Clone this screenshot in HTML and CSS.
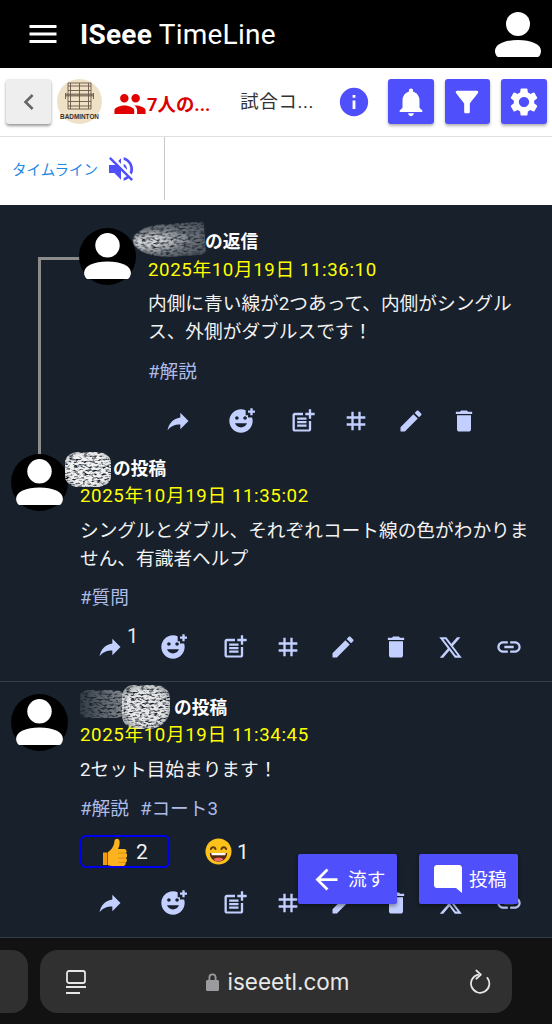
FILE: index.html
```html
<!DOCTYPE html>
<html lang="ja">
<head>
<meta charset="utf-8">
<title>ISeee TimeLine</title>
<link rel="stylesheet" href="styles.css">
</head>
<body>
<svg class="defs" width="0" height="0" aria-hidden="true">
  <filter id="scribble" x="-15%" y="-15%" width="130%" height="130%">
    <feTurbulence type="fractalNoise" baseFrequency=".22 .55" numOctaves="3" seed="7"/>
    <feColorMatrix values="0 0 0 0 .88  0 0 0 0 .88  0 0 0 0 .88  0 0 0 3.200 -.75"/>
    <feComposite in2="SourceGraphic" operator="in"/>
    <feGaussianBlur stdDeviation=".7"/>
  </filter>
  <symbol id="i-menu" viewBox="0 0 24 24"><path d="M3 18h18v-2H3v2zm0-5h18v-2H3v2zm0-7v2h18V6H3z"/></symbol>
  <symbol id="i-person" viewBox="0 0 56 56"><circle cx="28" cy="17" r="12"/><path d="M5 44c0-7 10-11 23-11s23 4 23 11c0 3-2 6-3 6H8c-1 0-3-3-3-6z"/></symbol>
  <symbol id="i-share" viewBox="0 0 24 24"><path d="M14 9V5l7 7-7 7v-4.100c-5 0-8.500 1.600-11 5.100 1-5 4-10 11-11z"/></symbol>
  <symbol id="i-react" viewBox="0 0 24 24"><path d="M18 9V7h-2V2.840C14.770 2.300 13.420 2 11.990 2 6.470 2 2 6.480 2 12s4.470 10 9.990 10C17.520 22 22 17.520 22 12c0-1.050-.17-2.050-.47-3H18zm-2.500-1c.83 0 1.500.67 1.500 1.500s-.67 1.500-1.500 1.500-1.500-.67-1.500-1.500.67-1.500 1.500-1.500zm-7 0c.83 0 1.500.67 1.500 1.500S9.330 11 8.500 11 7 10.330 7 9.500 7.670 8 8.500 8zm3.500 9.500c-2.330 0-4.310-1.460-5.110-3.500h10.220c-.8 2.040-2.780 3.500-5.110 3.500zM22 3h2v2h-2v2h-2V5h-2V3h2V1h2v2z"/></symbol>
  <symbol id="i-post" viewBox="0 0 24 24"><path d="M17 19.220H5V7h7V5H5c-1.100 0-2 .9-2 2v12c0 1.100.9 2 2 2h12c1.100 0 2-.9 2-2v-7h-2v7.220zM19 2h-2v3h-3c.01.01 0 2 0 2h3v2.990c.01.01 2 0 2 0V7h3V5h-3V2zM7 9h8v2H7zm0 3v2h8v-2h-3zm0 3h8v2H7z"/></symbol>
  <symbol id="i-tag" viewBox="0 0 24 24"><path d="M20 10V8h-4V4h-2v4h-4V4H8v4H4v2h4v4H4v2h4v4h2v-4h4v4h2v-4h4v-2h-4v-4h4zm-6 4h-4v-4h4v4z"/></symbol>
  <symbol id="i-edit" viewBox="0 0 24 24"><path d="M3 17.250V21h3.750L17.810 9.940l-3.750-3.750L3 17.250zM20.710 7.040c.39-.39.39-1.020 0-1.410l-2.340-2.340c-.39-.39-1.020-.39-1.410 0l-1.830 1.830 3.750 3.750 1.830-1.830z"/></symbol>
  <symbol id="i-delete" viewBox="0 0 24 24"><path d="M6 19c0 1.100.9 2 2 2h8c1.100 0 2-.9 2-2V7H6v12zM19 4h-3.500l-1-1h-5l-1 1H5v2h14V4z"/></symbol>
  <symbol id="i-x" viewBox="0 0 24 24"><path d="M18.244 2.250h3.308l-7.227 8.260 8.502 11.240H16.170l-5.214-6.817L4.990 21.750H1.680l7.730-8.835L1.254 2.250H8.080l4.713 6.231zm-1.161 17.520h1.833L7.084 4.126H5.117z"/></symbol>
  <symbol id="i-link" viewBox="0 0 24 24"><path d="M3.900 12c0-1.710 1.390-3.100 3.100-3.100h4V7H7c-2.760 0-5 2.240-5 5s2.240 5 5 5h4v-1.900H7c-1.710 0-3.100-1.390-3.100-3.100zM8 13h8v-2H8v2zm9-6h-4v1.900h4c1.710 0 3.100 1.390 3.100 3.100s-1.390 3.100-3.100 3.100h-4V17h4c2.760 0 5-2.240 5-5s-2.240-5-5-5z"/></symbol>
  <symbol id="i-avatar" viewBox="0 0 56 56"><circle cx="28" cy="28" r="28" fill="#000"/><circle cx="28" cy="17" r="12" fill="#fff"/><path fill="#fff" d="M5 44c0-7 10-11 23-11s23 4 23 11c0 3-2 6-3 6H8c-1 0-3-3-3-6z"/></symbol>
</svg>

<header class="appbar">
  <svg class="ic-menu"><use href="#i-menu"/></svg>
  <h1 class="title"><b>ISeee</b> TimeLine</h1>
  <svg class="ic-user"><use href="#i-person"/></svg>
</header>

<nav class="toolbar">
  <button class="back">
    <svg viewBox="0 0 24 24"><path d="M15.410 7.410L14 6l-6 6 6 6 1.410-1.410L10.830 12z"/></svg>
  </button>
  <svg class="logo" viewBox="0 0 45 45">
    <circle cx="22.500" cy="22.500" r="22.500" fill="#efe1c6"/>
    <g fill="none" stroke="#6a5848" stroke-width=".9">
      <path d="M11 4h23v26H11zM13.500 4v26M31.500 4v26M11 7h23M11 27h23M22.500 4v26"/>
      <path d="M11 11.500h23M11 22.500h23M8.500 14v6M36.500 14v6"/>
    </g>
    <path d="M8.500 14.500h28v3h-28z" fill="#6a5848" opacity=".75"/>
    <text class="logo-text" x="22.500" y="39.500" text-anchor="middle">BADMINTON</text>
  </svg>
  <svg class="ic-group" viewBox="0 0 24 24"><path d="M16 11c1.660 0 2.990-1.340 2.990-3S17.660 5 16 5c-1.660 0-3 1.340-3 3s1.340 3 3 3zm-8 0c1.660 0 2.990-1.340 2.990-3S9.660 5 8 5C6.340 5 5 6.340 5 8s1.340 3 3 3zm0 2c-2.330 0-7 1.170-7 3.500V19h14v-2.500c0-2.330-4.670-3.500-7-3.500zm8 0c-.29 0-.62.020-.97.050 1.160.840 1.970 1.970 1.970 3.450V19h6v-2.500c0-2.330-4.670-3.500-7-3.500z"/></svg>
  <span class="members">7人の...</span>
  <span class="match">試合コ...</span>
  <svg class="ic-info" viewBox="0 0 24 24"><path d="M12 2C6.480 2 2 6.480 2 12s4.480 10 10 10 10-4.480 10-10S17.520 2 12 2zm1 15h-2v-6h2v6zm0-8h-2V7h2v2z"/></svg>
  <button class="tool">
    <svg viewBox="0 0 24 24"><path d="M12 22c1.100 0 2-.9 2-2h-4c0 1.100.89 2 2 2zm6-6v-5c0-3.070-1.640-5.640-4.500-6.320V4c0-.83-.67-1.500-1.500-1.500s-1.500.67-1.500 1.500v.68C7.630 5.360 6 7.920 6 11v5l-2 2v1h16v-1l-2-2z"/></svg>
  </button>
  <button class="tool">
    <svg viewBox="0 0 24 24"><path d="M4.250 5.610C6.270 8.200 10 13 10 13v6c0 .55.45 1 1 1h2c.55 0 1-.45 1-1v-6s3.720-4.800 5.740-7.390C20.250 4.950 19.780 4 18.950 4H5.040c-.83 0-1.300.95-.79 1.610z"/></svg>
  </button>
  <button class="tool">
    <svg viewBox="0 0 24 24"><path d="M19.140 12.940c.04-.3.06-.61.06-.94 0-.32-.02-.64-.07-.94l2.030-1.580c.18-.14.23-.41.12-.61l-1.920-3.320c-.12-.22-.37-.29-.59-.22l-2.390.96c-.5-.38-1.030-.7-1.620-.94l-.36-2.540c-.04-.24-.24-.41-.48-.41h-3.840c-.24 0-.43.17-.47.41l-.36 2.540c-.59.24-1.130.57-1.620.94l-2.390-.96c-.22-.08-.47 0-.59.22L2.740 8.870c-.12.21-.08.47.12.61l2.030 1.580c-.05.3-.09.63-.09.94s.02.64.07.94l-2.030 1.580c-.18.14-.23.41-.12.61l1.920 3.320c.12.22.37.29.59.22l2.390-.96c.5.38 1.030.7 1.620.94l.36 2.540c.05.24.24.41.48.41h3.840c.24 0 .44-.17.47-.41l.36-2.540c.59-.24 1.130-.56 1.620-.94l2.390.96c.22.08.47 0 .59-.22l1.920-3.320c.12-.22.07-.47-.12-.61l-2.010-1.580zM12 15.600c-1.980 0-3.600-1.620-3.600-3.600s1.620-3.600 3.600-3.600 3.600 1.620 3.600 3.600-1.620 3.600-3.600 3.600z"/></svg>
  </button>
</nav>

<section class="tabs">
  <div class="tab">
    <span class="tab-label">タイムライン</span>
    <svg class="ic-mute" viewBox="0 0 24 24"><path d="M16.500 12c0-1.770-1.020-3.290-2.500-4.030v2.210l2.450 2.450c.03-.2.05-.41.05-.63zm2.500 0c0 .94-.2 1.820-.54 2.640l1.510 1.510C20.630 14.910 21 13.500 21 12c0-4.280-2.990-7.860-7-8.770v2.060c2.890.86 5 3.540 5 6.710zM4.270 3L3 4.270 7.730 9H3v6h4l5 5v-6.730l4.250 4.250c-.67.52-1.420.93-2.250 1.180v2.060c1.380-.31 2.630-.95 3.690-1.810L19.730 21 21 19.730l-9-9L4.270 3zM12 4L9.910 6.090 12 8.180V4z"/></svg>
  </div>
</section>

<main class="timeline">
  <article class="post post-reply">
    <span class="connector"></span>
    <svg class="avatar"><use href="#i-avatar"/></svg>
    <div class="content">
      <div class="name"><span class="hidden-name hn-a"><i class="smear sa1"></i></span>の返信</div>
      <div class="date">2025年10月19日 11:36:10</div>
      <p class="body">内側に青い線が2つあって、内側がシングルス、外側がダブルスです！</p>
      <div class="tags"><span>#解説</span></div>
      <div class="actions">
        <svg class="act"><use href="#i-share"/></svg>
        <svg class="act"><use href="#i-react"/></svg>
        <svg class="act"><use href="#i-post"/></svg>
        <svg class="act"><use href="#i-tag"/></svg>
        <svg class="act"><use href="#i-edit"/></svg>
        <svg class="act"><use href="#i-delete"/></svg>
      </div>
    </div>
  </article>

  <article class="post post-second">
    <svg class="avatar"><use href="#i-avatar"/></svg>
    <div class="content">
      <div class="name"><span class="hidden-name hn-b"><i class="smear sb1"></i></span>の投稿</div>
      <div class="date">2025年10月19日 11:35:02</div>
      <p class="body">シングルとダブル、それぞれコート線の色がわかりません、有識者ヘルプ</p>
      <div class="tags"><span>#質問</span></div>
      <div class="actions">
        <span class="act-wrap"><svg class="act"><use href="#i-share"/></svg><sup class="count">1</sup></span>
        <svg class="act"><use href="#i-react"/></svg>
        <svg class="act"><use href="#i-post"/></svg>
        <svg class="act"><use href="#i-tag"/></svg>
        <svg class="act"><use href="#i-edit"/></svg>
        <svg class="act"><use href="#i-delete"/></svg>
        <svg class="act act-x"><use href="#i-x"/></svg>
        <svg class="act"><use href="#i-link"/></svg>
      </div>
    </div>
  </article>

  <article class="post post-third">
    <svg class="avatar"><use href="#i-avatar"/></svg>
    <div class="content">
      <div class="name"><span class="hidden-name hn-c"><i class="smear sc1"></i><i class="smear sc2"></i></span>の投稿</div>
      <div class="date">2025年10月19日 11:34:45</div>
      <p class="body">2セット目始まります！</p>
      <div class="tags"><span>#解説</span><span>#コート3</span></div>
      <div class="reactions">
        <span class="reaction reaction-mine">
          <svg class="emoji-thumb" viewBox="0 0 24 28">
            <path fill="#f59a0c" d="M0 14.500h4.500V27H0z"/>
            <path fill="#fdb31f" d="M5 14C8 12 11 9 11.500 3 12 0 16 0 16.500 3 17 6 16 9 15 11h6c3 0 3 3 2 4 1.500 1 1.500 4 0 5 1.500 1.500 1 4-.5 4.500.5 2-.5 3.500-2.500 3.500H9c-2 0-4-1-4-1z"/>
            <path fill="none" stroke="#e8890a" stroke-width=".9" d="M15 15h8M15 20h8M15.500 24.500h7"/>
          </svg>
          <span>2</span>
        </span>
        <span class="reaction">
          <svg class="emoji" viewBox="0 0 28 28">
            <circle cx="14" cy="14" r="13.500" fill="#fcc21b"/>
            <path fill="none" stroke="#5a3a10" stroke-width="2" stroke-linecap="round" d="M6 11.500c1-2.500 4-2.500 5 0M17 11.500c1-2.500 4-2.500 5 0"/>
            <path fill="#5a2a10" d="M5 15.500h18c0 5.500-4 9-9 9s-9-3.500-9-9z"/>
            <path fill="#fff" d="M6.500 15.500h15l-.5 2.500H7z"/>
            <path fill="#ef6a6a" d="M9 22c2-2 8-2 10 0-1.500 1.700-3 2.300-5 2.300s-3.500-.6-5-2.300z"/>
          </svg>
          <span>1</span>
        </span>
      </div>
      <div class="actions">
        <svg class="act"><use href="#i-share"/></svg>
        <svg class="act"><use href="#i-react"/></svg>
        <svg class="act"><use href="#i-post"/></svg>
        <svg class="act"><use href="#i-tag"/></svg>
        <svg class="act"><use href="#i-edit"/></svg>
        <svg class="act"><use href="#i-delete"/></svg>
        <svg class="act act-x"><use href="#i-x"/></svg>
        <svg class="act"><use href="#i-link"/></svg>
      </div>
    </div>
  </article>

  <button class="fab fab-flow">
    <svg viewBox="0 0 24 24"><path d="M20 11H7.830l5.590-5.590L12 4l-8 8 8 8 1.410-1.410L7.830 13H20v-2z"/></svg>
    <span>流す</span>
  </button>
  <button class="fab fab-post">
    <svg viewBox="0 0 28 28"><path d="M3 0h22c1.700 0 3 1.300 3 3v25l-6-5H3c-1.700 0-3-1.300-3-3V3C0 1.300 1.300 0 3 0z"/></svg>
    <span>投稿</span>
  </button>
</main>

<footer class="browserbar">
  <div class="pill-stub"></div>
  <div class="urlbar">
    <svg class="ic-tabs" viewBox="0 0 22 24">
      <path fill="none" stroke="#e6e6e6" stroke-width="1.800" d="M4 1h14c1 0 2 1 2 2v8c0 1-1 2-2 2H4c-1 0-2-1-2-2V3c0-1 1-2 2-2zM1 17h20M1 23h14"/>
    </svg>
    <div class="address">
      <svg class="ic-lock" viewBox="0 0 13 18"><path fill="#9b9b9f" d="M2.500 7V4.500a4 4 0 0 1 8 0V7h1c.9 0 1.500.6 1.500 1.500v8c0 .9-.6 1.500-1.500 1.500h-10C.6 18 0 17.400 0 16.500v-8C0 7.600.6 7 1.500 7zm1.800 0h4.400V4.500a2.200 2.200 0 0 0-4.400 0z"/></svg>
      <span>iseeetl.com</span>
    </div>
    <svg class="ic-reload" viewBox="0 0 24 26">
      <path fill="none" stroke="#e6e6e6" stroke-width="1.900" stroke-linecap="round" stroke-linejoin="round" d="M10 5.500A10 10 0 1 0 20 9M8 1l5 4.500L8 10"/>
    </svg>
  </div>
</footer>
</body>
</html>
```

FILE: styles.css
```css
* { box-sizing: border-box; }

html, body {
  margin: 0;
  height: 1024px;
  overflow: hidden;
}

body {
  display: flex;
  flex-direction: column;
  width: 552px;
  background: #fff;
  font-family: Roboto, "Noto Sans CJK JP", sans-serif;
  color: #fff;
}

.defs { position: absolute; }

button {
  border: 0;
  padding: 0;
  font: inherit;
  display: flex;
  align-items: center;
  justify-content: center;
}

/* App bar */
.appbar {
  height: 68px;
  flex: none;
  background: #000;
  display: flex;
  align-items: center;
  padding: 0 6px 0 25px;
}
.ic-menu { width: 36px; height: 36px; fill: #fff; flex: none; }
.title {
  margin: 0 0 0 19px;
  font-size: 28px;
  font-weight: 400;
  flex: 1;
  letter-spacing: .25px;
}
.title b { font-weight: 700; }
.ic-user { width: 56px; height: 56px; fill: #fff; flex: none; margin-top: 2px; }

/* Toolbar */
.toolbar {
  height: 69px;
  flex: none;
  background: #fff;
  border-bottom: 1px solid #e0e0e0;
  display: flex;
  align-items: flex-start;
  padding: 11px 5px 0 6px;
}
.back {
  width: 45px;
  height: 45px;
  background: #eee;
  border-radius: 3px;
  box-shadow: 0 2px 3px rgba(0,0,0,.4);
  flex: none;
}
.back svg { width: 32px; height: 32px; fill: #666; }
.logo { width: 45px; height: 45px; margin-left: 6px; flex: none; }
.logo-text { font: 700 6.400px "Liberation Sans", sans-serif; fill: #3b3027; }
.ic-group { width: 34px; height: 34px; fill: #e00000; margin: 8px 0 0 11px; flex: none; }
.members {
  color: #d90000;
  font-weight: 700;
  font-size: 18.400px;
  line-height: 28px;
  margin: 12px 0 0 0;
  width: 93px;
  white-space: nowrap;
}
.match {
  color: #333;
  font-size: 18.700px;
  line-height: 28px;
  letter-spacing: .5px;
  margin: 9px 0 0 0;
  width: 98px;
  white-space: nowrap;
}
.ic-info { width: 34px; height: 34px; fill: #4f4ffb; margin: 6px 17px 0 -1px; flex: none; }
.tool {
  width: 45.500px;
  height: 45px;
  background: #4f4ffb;
  border-radius: 3px;
  box-shadow: 0 2px 3px rgba(0,0,0,.3);
  margin-right: 11px;
  flex: none;
}
.tool:last-child { margin-right: 0; }
.tool svg { width: 34px; height: 34px; fill: #fff; }

/* Tabs */
.tabs {
  height: 68px;
  flex: none;
  background: #fff;
  display: flex;
}
.tab {
  width: 165px;
  height: 63px;
  border-right: 1px solid #c8c8c8;
  display: flex;
  align-items: center;
  padding-left: 12px;
}
.tab-label { color: #1e88e5; font-size: 14.500px; white-space: nowrap; }
.ic-mute { width: 32px; height: 32px; fill: #4f4ffb; margin-left: 7px; flex: none; }

/* Timeline */
.timeline {
  position: relative;
  flex: 1;
  min-height: 0;
  background: #17202b;
}
.post { position: relative; display: flex; align-items: flex-start; }
.post-reply { padding: 22px 0 11px 79px; }
.post-second { padding: 0 0 12px 11px; border-bottom: 1px solid #353d49; }
.post-third { padding: 11px 0 12px 11px; border-bottom: 1px solid #353d49; }

.connector {
  position: absolute;
  left: 38px;
  top: 52px;
  width: 42px;
  height: 198px;
  border-left: 3px solid #8c8c8c;
  border-top: 3px solid #8c8c8c;
}
.avatar {
  width: 57px;
  height: 57px;
  margin-top: 1px;
  flex: none;
  position: relative;
}
.post-second .avatar { margin-top: 0; }
.content { margin-left: 12px; width: 461px; flex: none; }
.post-reply .content { width: 384px; }

.name {
  height: 28px;
  padding-top: 1px;
  font-size: 17.700px;
  font-weight: 700;
  line-height: 28px;
  white-space: nowrap;
}
.hidden-name { display: inline-block; position: relative; height: 28px; vertical-align: top; }
.hn-a { width: 57px; }
.hn-b { width: 33px; }
.hn-c { width: 94px; }

.smear {
  position: absolute;
  display: block;
  filter: url(#scribble);
  background: #fff;
}
.sa1 {
  left: -15px; top: -4px; width: 72px; height: 33px;
  border-radius: 45% 5% 10% 60%;
  background: radial-gradient(ellipse at 25% 50%, rgba(255,255,255,.85) 15%, rgba(255,255,255,.4) 55%, rgba(255,255,255,.2));
  transform: rotate(-4deg);
}
.sb1 {
  left: -15px; top: -3px; width: 46px; height: 35px;
  border-radius: 30%;
  background: radial-gradient(ellipse at 50% 50%, #fff 60%, rgba(255,255,255,.7));
}
.sc1 {
  left: 0; top: -4px; width: 44px; height: 28px;
  border-radius: 20%;
  background: linear-gradient(90deg, rgba(255,255,255,.12), rgba(255,255,255,.5));
}
.sc2 {
  left: 42px; top: -9px; width: 48px; height: 44px;
  border-radius: 25% 30% 45% 30%;
  background: radial-gradient(ellipse at 50% 50%, rgba(255,255,255,.95) 55%, rgba(255,255,255,.4));
}

.date {
  color: #ffff00;
  font-size: 18.700px;
  line-height: 28px;
  letter-spacing: .6px;
  white-space: nowrap;
}
.post-reply .date { margin-top: 1px; }
.body {
  margin: 7px 0 0;
  font-size: 18.700px;
  line-height: 28px;
  color: #f2f2f2;
}
.post-reply .body { margin-top: 6px; }
.tags {
  margin-top: 11px;
  display: flex;
  gap: 11px;
  font-size: 18.700px;
  line-height: 28px;
  color: #aebbe6;
}
.post-reply .tags { margin-top: 12px; }

.reactions {
  margin-top: 12px;
  display: grid;
  grid-template-columns: 90px 90px;
  gap: 23px;
}
.reaction {
  height: 33px;
  display: flex;
  align-items: center;
  gap: 5px;
  font-size: 21px;
  color: #f0f0f0;
  padding-left: 12px;
}
.reaction-mine {
  padding-left: 21px;
  gap: 9px;
  border: 2px solid #0000f0;
  border-radius: 6px;
}
.emoji { width: 27px; height: 27px; flex: none; }
.emoji-thumb { width: 24px; height: 28px; flex: none; }

.actions {
  margin-top: 13px;
  height: 44px;
  display: grid;
  grid-template-columns: 60px 66px 58px 48px 62px 44px 64px 54px;
  justify-items: center;
  align-items: center;
}
.act { width: 28px; height: 28px; fill: #c3d0ff; display: block; }
.act-x { width: 25px; height: 25px; }
.act-wrap { position: relative; display: block; }
.count {
  position: absolute;
  left: 31px;
  top: -8px;
  font-size: 20px;
  line-height: 22px;
  color: #e8e8e8;
  vertical-align: baseline;
}

/* Floating buttons */
.fab {
  position: absolute;
  top: 649px;
  height: 50px;
  width: 99px;
  background: #4f4ffb;
  color: #fff;
  font-size: 18.700px;
  border-radius: 2px;
  justify-content: flex-start;
  box-shadow: 0 2px 4px rgba(0,0,0,.4);
}
.fab span { margin-bottom: 4px; }
.fab-flow { left: 298px; padding-left: 12px; gap: 5px; }
.fab-post { left: 419px; padding-left: 15px; gap: 7px; }
.fab-flow svg { width: 33px; height: 33px; fill: #fff; flex: none; }
.fab-post svg { width: 28px; height: 28px; fill: #fff; flex: none; }

/* Browser chrome */
.browserbar {
  height: 86px;
  flex: none;
  background: #121212;
  position: relative;
  padding-top: 12px;
}
.pill-stub {
  position: absolute;
  left: -20px;
  top: 12px;
  width: 48px;
  height: 63px;
  background: #303030;
  border-radius: 16px;
}
.urlbar {
  margin-left: 40px;
  width: 472px;
  height: 63px;
  background: #303030;
  border-radius: 18px;
  display: flex;
  align-items: center;
  padding: 0 21px 0 25px;
}
.ic-tabs { width: 22px; height: 24px; flex: none; }
.address {
  flex: 1;
  display: flex;
  align-items: center;
  justify-content: center;
  gap: 8px;
  font-family: Inter, sans-serif;
  font-size: 22.500px;
  color: #e8e8e8;
}
.ic-lock { width: 13px; height: 18px; flex: none; }
.ic-reload { width: 22px; height: 25px; flex: none; }
```
